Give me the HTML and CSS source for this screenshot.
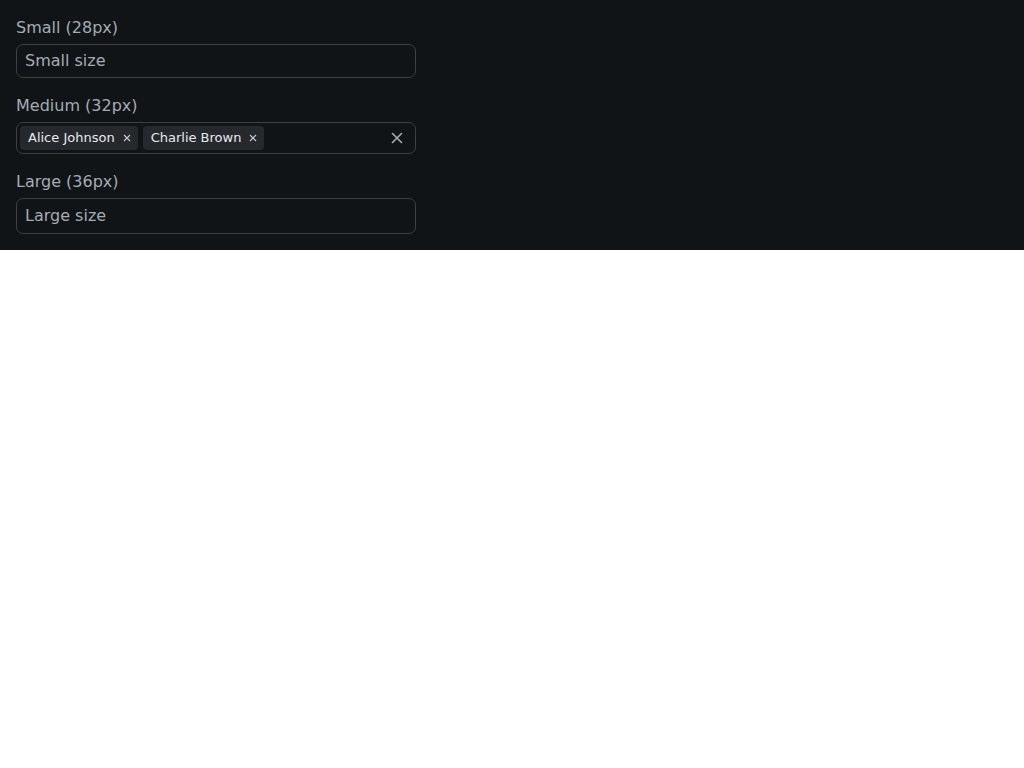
FILE: index.html
```html
<!DOCTYPE html>
<html lang="en">

<head>
    <meta charset="UTF-8">
    <meta name="viewport" content="width=device-width, initial-scale=1.0">
    <title>Multi-select sizes</title>
    <link rel="stylesheet" href="styles.css">
</head>

<body>

    <div class="demo">

        <!-- small -->
        <div class="field">
            <label class="field-label" for="small">Small (28px)</label>
            <div class="select select-sm">
                <input id="small" class="select-input" placeholder="Small size">
            </div>
        </div>

        <!-- medium, with selected values -->
        <div class="field">
            <label class="field-label" for="medium">Medium (32px)</label>
            <div class="select select-md">
                <span class="tag">Alice Johnson
                    <svg class="tag-remove" width="8" height="8" viewBox="0 0 8 8">
                        <path d="M1 1l6 6M7 1l-6 6" stroke="currentColor" stroke-width="1.1" />
                    </svg>
                </span>
                <span class="tag">Charlie Brown
                    <svg class="tag-remove" width="8" height="8" viewBox="0 0 8 8">
                        <path d="M1 1l6 6M7 1l-6 6" stroke="currentColor" stroke-width="1.1" />
                    </svg>
                </span>
                <input id="medium" class="select-input">
                <button class="select-clear" aria-label="Clear">
                    <svg width="12" height="12" viewBox="0 0 12 12">
                        <path d="M1.5 1.5l9 9M10.5 1.5l-9 9" stroke="currentColor" stroke-width="1.6"
                            stroke-linecap="round" />
                    </svg>
                </button>
            </div>
        </div>

        <!-- large -->
        <div class="field">
            <label class="field-label" for="large">Large (36px)</label>
            <div class="select select-lg">
                <input id="large" class="select-input" placeholder="Large size">
            </div>
        </div>

    </div>

</body>

</html>
```

FILE: styles.css
```css
body {
    margin: 0;
    padding: 0;
    font-family: 'DejaVu Sans', sans-serif;
    background-color: #fff;
}

.demo {
    background-color: #111416;
    padding: 16px;
    display: flex;
    flex-direction: column;
    gap: 16px;
}

.field {
    display: flex;
    flex-direction: column;
    gap: 4px;
    width: 400px;
}

.field-label {
    font-size: 16px;
    line-height: 24px;
    color: #a3acb5;
}

.select {
    box-sizing: border-box;
    display: flex;
    align-items: center;
    gap: 5px;
    border: 1px solid #3c4147;
    border-radius: 7px;
    padding: 0 8px 2px;
}

.select-sm {
    height: 34px;
}

.select-md {
    height: 32px;
    padding: 0 3px 1px;
}

.select-lg {
    height: 36px;
}

.select-input {
    flex: 1;
    min-width: 0;
    background: none;
    border: 0;
    outline: none;
    padding: 0;
    font-family: inherit;
    font-size: 16px;
    color: #e6e6e6;
}

.select-input::placeholder {
    color: #a3acb5;
}

.tag {
    display: inline-flex;
    align-items: center;
    gap: 8px;
    height: 24px;
    padding: 0 7px 1px 8px;
    box-sizing: border-box;
    border-radius: 4px;
    background-color: #25292d;
    color: #e8eaec;
    font-size: 13px;
    white-space: nowrap;
}

.tag-remove {
    color: #c9cdd1;
    margin-top: 1px;
}

.select-clear {
    display: flex;
    align-items: center;
    justify-content: center;
    width: 24px;
    height: 24px;
    margin-right: 3px;
    padding: 0;
    border: 0;
    background: none;
    color: #a3acb5;
}
```
